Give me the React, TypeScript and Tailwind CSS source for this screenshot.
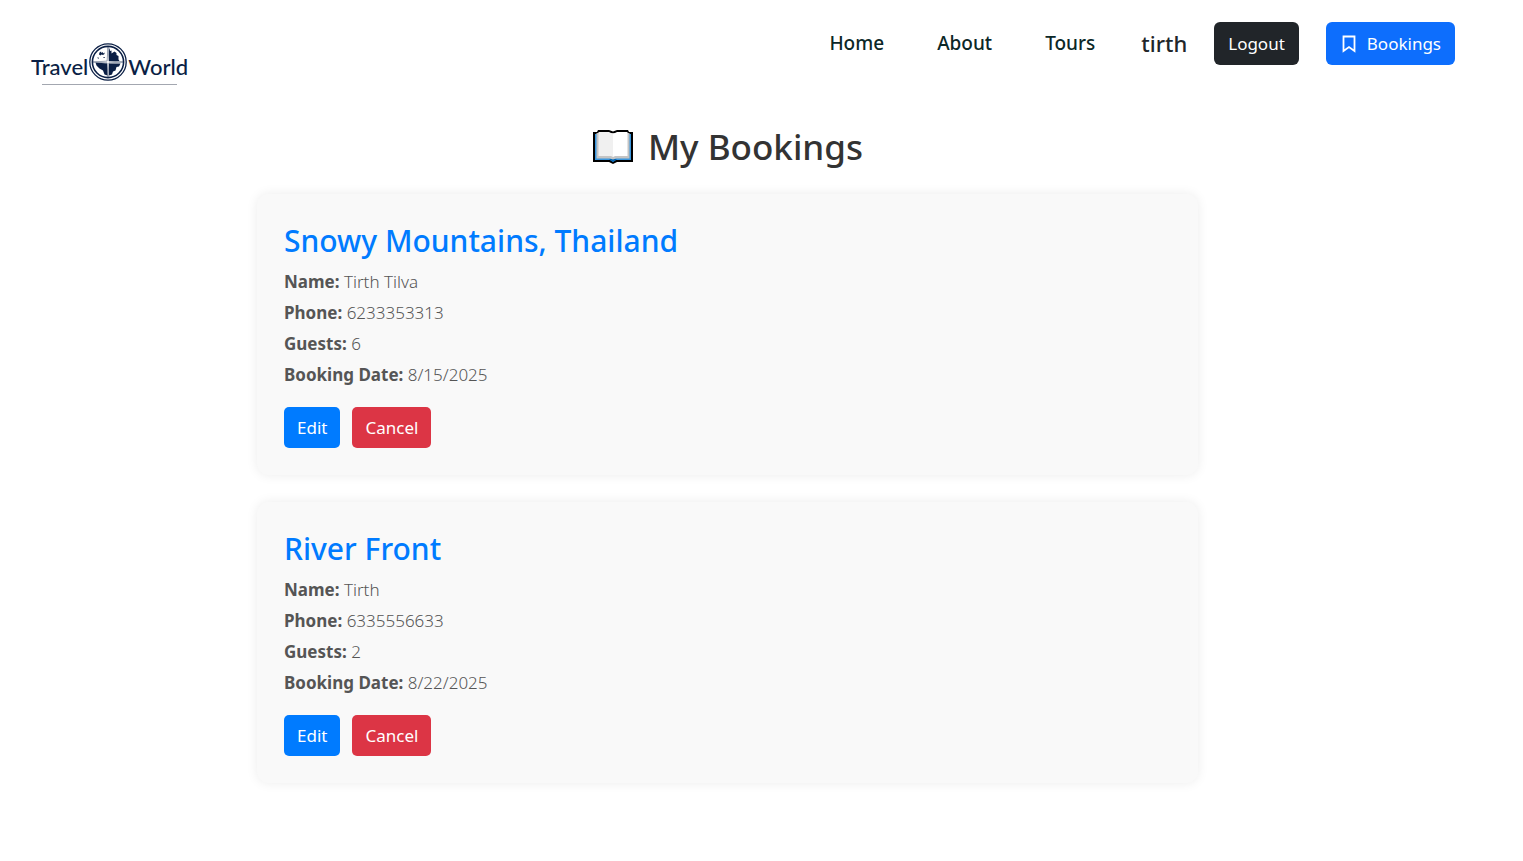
type Booking = {
  id: number;
  title: string;
  name: string;
  phone: string;
  guests: number;
  date: string;
};

const bookings: Booking[] = [
  { id: 1, title: "Snowy Mountains, Thailand", name: "Tirth Tilva", phone: "6233353313", guests: 6, date: "8/15/2025" },
  { id: 2, title: "River Front", name: "Tirth", phone: "6335556633", guests: 2, date: "8/22/2025" },
];

function Logo() {
  return (
    <a href="#" aria-label="Travel World" className="mt-5 flex flex-col items-center text-[#0b1f45]">
      <span className="flex h-10 items-center font-['Lato',sans-serif] text-[22px] leading-8 font-medium">
        <span className="pt-2.5">Travel</span>
        <svg viewBox="0 0 40 40" className="size-10" aria-hidden="true">
          <circle cx="20" cy="20" r="18.2" fill="#fff" stroke="currentColor" strokeWidth="1.3" />
          <circle cx="20" cy="20" r="15.6" fill="#fff" stroke="currentColor" strokeWidth="1.6" />
          <path d="M21 6.500h0.500l.5 2.500 1.500-.5v3l3-2 2 1.500v2l2 1v3.500l1 1.500-10.500 .5z" fill="currentColor" />
          <path d="M7.500 20.500l12 1v12l-3-1-1.500-4-3.500-2-3-3z" fill="currentColor" />
          <path d="M21 21.500h11.500l-1.500 3-2.500.5-1 3.500-2.500 1-1 3-3 1z" fill="currentColor" />
          <path d="M11.500 10.500l1.500-1 .5 1.500 1.500-1v1.500l1.500-1v1.500l-1.500 1-1.500-.5-1 1-1.500-1zM9.500 15l1.500 1-1 1zM15.500 15h1.200v1h-1.200z" fill="currentColor" />
          <path d="M20 5l.9 14.100 14.100.9-14.100.9-.9 14.100-.9-14.100-14.100-.9 14.100-.9z" fill="#fff" stroke="currentColor" strokeWidth=".4" />
        </svg>
        <span className="pt-2.5">World</span>
      </span>
      <span className="mt-0.5 h-px w-[135px] bg-[#a3a7b0]" />
    </a>
  );
}

function BookIcon() {
  return (
    <svg viewBox="0 0 42 36" className="h-9 w-[42px]" aria-hidden="true">
      <path d="M1 3h4l1-2h11l4 1.500L25 1h11l1 2h4v30H25l-4 2-4-2H1z" fill="#000" />
      <path d="M3 5h36v26H24l-3 2-3-2H3z" fill="#3a96dd" />
      <path d="M17 30h8l-4 3z" fill="#0063b1" />
      <path d="M4.500 4h33v25.500H24l-3 1-3-1H4.500z" fill="#c4c4c4" />
      <path d="M6.500 3h10.500l4 2v23l-2-1H6.500z" fill="#f0f0f0" />
      <path d="M21 5l4-2h10.500v24H23l-2 1z" fill="#fff" />
    </svg>
  );
}

function Detail({ label, value }: { label: string; value: string | number }) {
  return (
    <p>
      <strong className="font-bold">{label}:</strong> {value}
    </p>
  );
}

function BookingCard({ booking }: { booking: Booking }) {
  return (
    <article className="rounded-xl bg-[#f9f9f9] px-[27px] pt-7 pb-[27px] shadow-[0_0_12px_rgba(0,0,0,0.08)]">
      <h3 className="text-[30px] leading-[38px] font-medium text-[#007bff]">{booking.title}</h3>
      <div className="mt-1.5 text-[17px] leading-[31px] font-light text-[#555]">
        <Detail label="Name" value={booking.name} />
        <Detail label="Phone" value={booking.phone} />
        <Detail label="Guests" value={booking.guests} />
        <Detail label="Booking Date" value={booking.date} />
      </div>
      <div className="mt-[17px] flex gap-3 text-[17px] text-white">
        <button type="button" className="h-[41px] rounded-[5px] bg-[#007bff] px-[13px]">Edit</button>
        <button type="button" className="h-[41px] rounded-[5px] bg-[#dc3545] px-[13px]">Cancel</button>
      </div>
    </article>
  );
}

export default function App() {
  return (
    <div className="min-h-screen bg-white font-['Noto_Sans','Open_Sans',sans-serif]">
      <header className="flex items-start justify-between pt-[22px] pr-[68px] pl-[31px]">
        <Logo />
        <div className="flex h-[43px] items-center">
          <nav className="flex gap-[53px] text-[19px] font-medium text-[#0b2727]">
            <a href="#">Home</a>
            <a href="#">About</a>
            <a href="#">Tours</a>
          </nav>
          <h5 className="ml-[46px] text-[22px] font-medium text-[#212529]">tirth</h5>
          <button type="button" className="ml-[27px] h-[43px] rounded-md bg-[#212529] px-3.5 text-[17px] text-white">
            Logout
          </button>
          <a href="#" className="ml-[27px] flex h-[43px] items-center gap-[9px] rounded-md bg-[#0d6efd] px-3.5 text-[17px] text-white">
            <svg viewBox="0 0 18 18" className="size-[18px]" fill="none" stroke="currentColor" strokeWidth="1.800" aria-hidden="true">
              <path d="M3.500 1.500h11v14.500l-5.500-4-5.500 4z" />
            </svg>
            Bookings
          </a>
        </div>
      </header>
      <main className="pt-10 pr-[68px] pb-10">
        <div className="mx-auto max-w-[941px]">
          <h2 className="flex items-center justify-center gap-3.5 text-[35px] leading-[44px] font-medium text-[#333]">
            <BookIcon />
            My Bookings
          </h2>
          <div className="mt-[25px] flex flex-col gap-[27px]">
            {bookings.map((booking) => (
              <BookingCard key={booking.id} booking={booking} />
            ))}
          </div>
        </div>
      </main>
    </div>
  );
}
